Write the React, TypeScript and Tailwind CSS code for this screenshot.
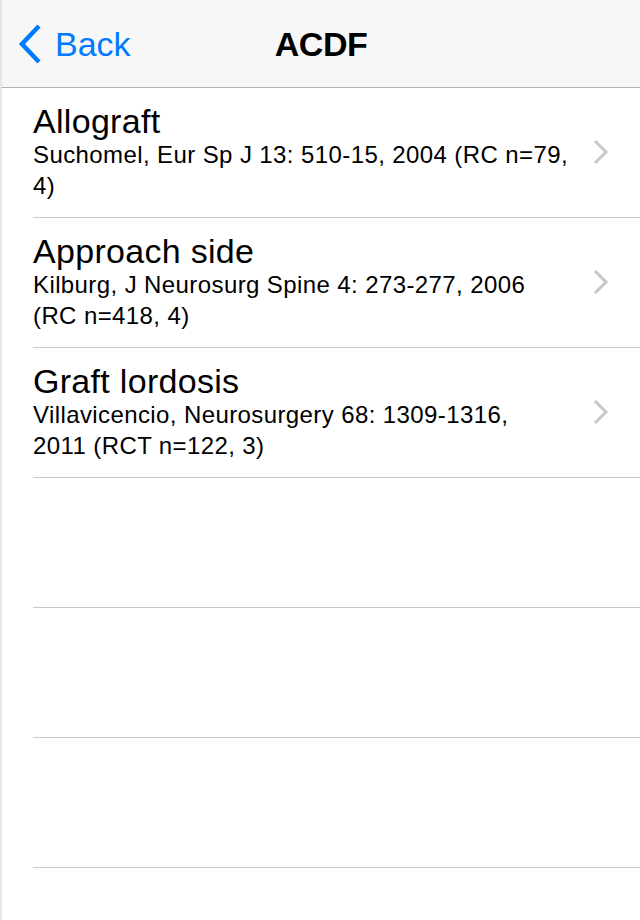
const rows = [
  {
    title: "Allograft",
    cite: ["Suchomel, Eur Sp J 13: 510-15, 2004 (RC n=79,", "4)"],
  },
  {
    title: "Approach side",
    cite: ["Kilburg, J Neurosurg Spine 4: 273-277, 2006", "(RC n=418, 4)"],
  },
  {
    title: "Graft lordosis",
    cite: ["Villavicencio, Neurosurgery 68: 1309-1316,", "2011 (RCT n=122, 3)"],
  },
  null,
  null,
  null,
];

function Chevron() {
  return (
    <svg width="16" height="26" viewBox="0 0 16 26" fill="none">
      <path d="M2 2 L13 13 L2 24" stroke="#c7c7cc" strokeWidth="3" />
    </svg>
  );
}

export default function App() {
  return (
    <div
      className="w-[640px] h-[920px] bg-white overflow-hidden border-l-2 border-[#e6e6e6]"
      style={{ fontFamily: '"Liberation Sans", Arial, sans-serif' }}
    >
      {/* Nav bar */}
      <div className="relative h-[88px] bg-[#f7f7f7] border-b border-[#b2b2b2] flex items-center">
        <div className="flex items-center pl-[15px] text-[#007aff]">
          <svg width="28" height="42" viewBox="0 0 28 42" fill="none">
            <path d="M22 3 L5 21 L22 39" stroke="#007aff" strokeWidth="4.5" />
          </svg>
          <span className="ml-[10px] text-[34px] leading-none">Back</span>
        </div>
        <div className="absolute inset-0 flex items-center justify-center pointer-events-none">
          <span className="text-[34px] font-bold leading-none text-black tracking-[-0.5px]">ACDF</span>
        </div>
      </div>

      {/* Table */}
      <div>
        {rows.map((row, i) => (
          <div key={i} className="pl-[31px]">
            <div className="h-[130px] border-b border-[#c8c7cc] flex items-start">
              {row && (
                <>
                  <div className="w-[545px] pt-[15px] text-black">
                    <div className="text-[34px] leading-[36px] tracking-[0.3px]">{row.title}</div>
                    <div className="text-[24px] leading-[31px] tracking-[0.4px]">
                      {row.cite[0]}
                      <br />
                      {row.cite[1]}
                    </div>
                  </div>
                  <div className="flex-1 h-full flex items-center justify-center pr-[16px] pb-[2px]">
                    <Chevron />
                  </div>
                </>
              )}
            </div>
          </div>
        ))}
      </div>
    </div>
  );
}
